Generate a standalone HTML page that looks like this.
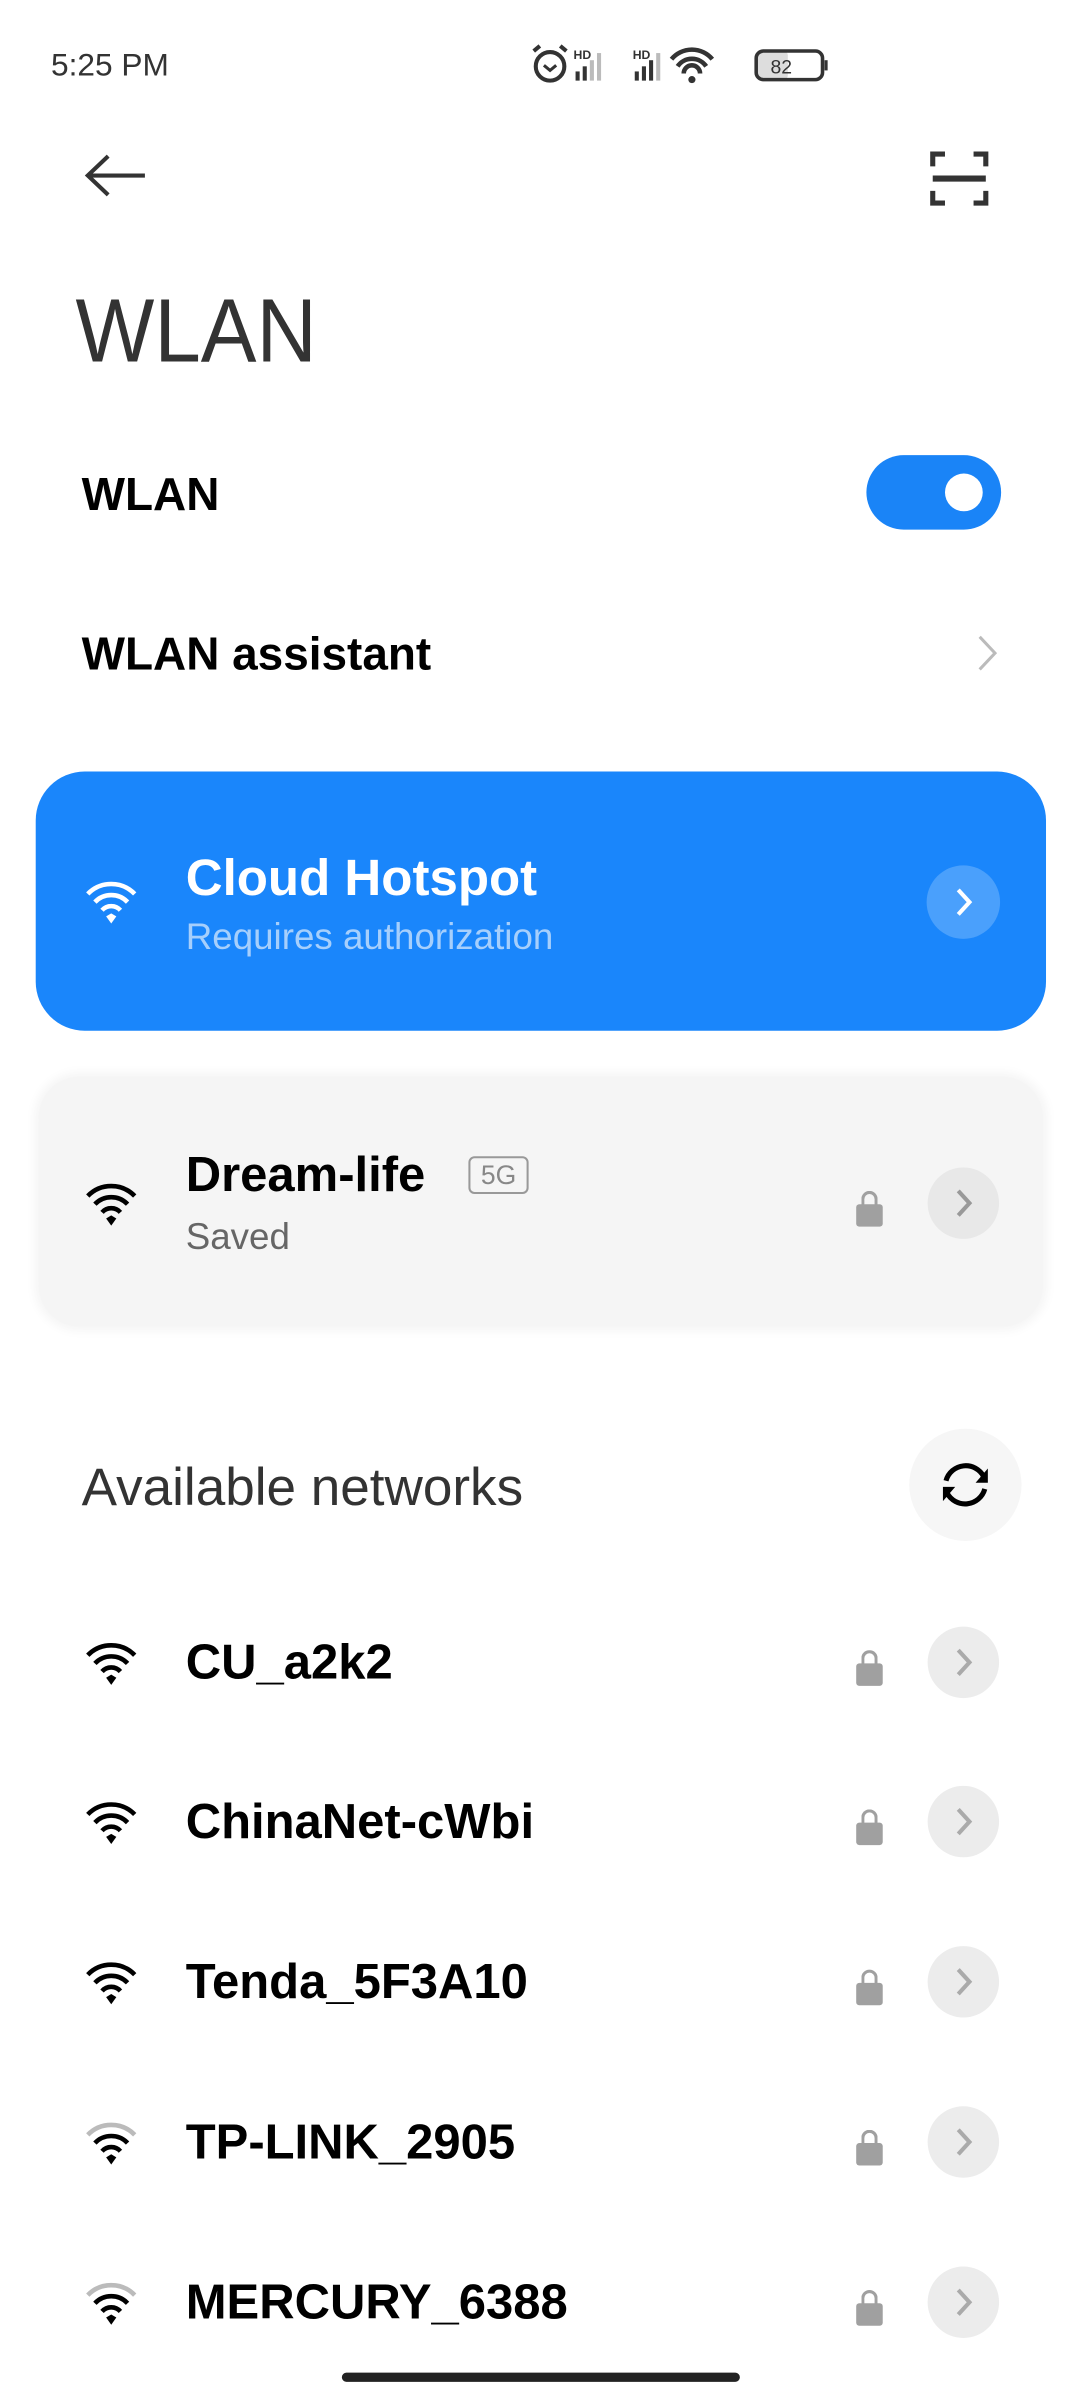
<!DOCTYPE html>
<html style="width:1080px;height:2400px;overflow:hidden"><head><meta charset="utf-8"><style>
*{margin:0;padding:0;box-sizing:border-box}
body{width:1080px;height:2400px;background:#fff;position:relative;overflow:hidden;font-family:"Liberation Sans",sans-serif;color:#000}
#w{position:absolute;left:0;top:0;width:1080px;height:2400px;transform:scale(1.0205);transform-origin:0 0}
.a{position:absolute}
.t{position:absolute;white-space:nowrap;line-height:1}
.chev{position:absolute;width:70px;height:70px;border-radius:50%;background:#ececec}
.lock{position:absolute;width:26px;height:22px;background:#a0a0a0;border-radius:3px}
.lock:before{content:"";position:absolute;left:5px;top:-13px;width:10px;height:14px;border:3px solid #a0a0a0;border-bottom:none;border-radius:9px 9px 0 0}
</style></head><body><div id="w">
<div class="t" style="left:50px;top:48px;font-size:31px;color:#333">5:25 PM</div>
<svg class="a" style="left:515px;top:40px" width="310" height="50" viewBox="0 0 310 50">
 <circle cx="24" cy="25" r="14" fill="none" stroke="#333" stroke-width="4"/>
 <path d="M18 24l6 5 6-5" fill="none" stroke="#333" stroke-width="3"/>
 <path d="M8 10l6-5M40 10l-6-5" stroke="#333" stroke-width="4"/>
 <text x="47" y="18" font-size="12" font-weight="bold" fill="#333" font-family="Liberation Sans">HD</text>
 <rect x="49" y="30" width="4" height="9" fill="#333"/><rect x="56" y="25" width="4" height="14" fill="#333"/><rect x="63" y="19" width="4" height="20" fill="#bbb"/><rect x="70" y="12" width="4" height="27" fill="#bbb"/>
 <text x="105" y="18" font-size="12" font-weight="bold" fill="#333" font-family="Liberation Sans">HD</text>
 <rect x="107" y="30" width="4" height="9" fill="#333"/><rect x="114" y="25" width="4" height="14" fill="#333"/><rect x="121" y="19" width="4" height="20" fill="#333"/><rect x="128" y="12" width="4" height="27" fill="#bbb"/>
 <path d="M143 18a26 26 0 0 1 40 0M149 25a17 17 0 0 1 28 0M155 32a8 8 0 0 1 16 0" fill="none" stroke="#333" stroke-width="4.5"/>
 <circle cx="163" cy="38" r="3.5" fill="#333"/>
 <rect x="227" y="10" width="30" height="28" rx="4" fill="#ddd"/>
 <rect x="226" y="10" width="65" height="28" rx="7" fill="none" stroke="#333" stroke-width="3.5"/>
 <rect x="293" y="19" width="3" height="10" fill="#333"/>
 <text x="240" y="32" font-size="19" fill="#333" font-family="Liberation Sans">82</text>
</svg>
<svg class="a" style="left:82px;top:150px" width="62" height="44"><path d="M4 22H60M24 3L4 22l20 19" fill="none" stroke="#333" stroke-width="4"/></svg>
<svg class="a" style="left:910px;top:145px" width="60" height="60"><path d="M4 18V6h12M56 18V6H44M4 42v12h12M56 42v12H44" fill="none" stroke="#333" stroke-width="5"/><path d="M4 30h52" stroke="#333" stroke-width="6"/></svg>
<div class="t" style="left:74px;top:280px;font-size:88px;font-weight:300;color:#333;transform:scaleX(0.93);transform-origin:left">WLAN</div>
<div class="t" style="left:80px;top:462px;font-size:45px;font-weight:bold">WLAN</div>
<div class="a" style="left:849px;top:446px;width:132px;height:73px;border-radius:37px;background:#1a84f7"></div>
<div class="a" style="left:926px;top:464px;width:37px;height:37px;border-radius:50%;background:#fff"></div>
<div class="t" style="left:80px;top:618px;font-size:45px;font-weight:bold">WLAN assistant</div>
<svg class="a" style="left:956px;top:620px" width="24" height="40"><path d="M4 4l15 16L4 36" fill="none" stroke="#bbb" stroke-width="3"/></svg>

<div class="a" style="left:35px;top:756px;width:990px;height:254px;border-radius:48px;background:#1a86fb"></div>
<svg class="a" style="left:82px;top:860px" width="54" height="46" viewBox="0 0 54 46"><path d="M4 16a32 32 0 0 1 46 0M11 24a22 22 0 0 1 32 0M18 32a12 12 0 0 1 18 0" fill="none" stroke="#fff" stroke-width="4.5"/><path d="M22 38l5-3 5 3-5 7z" fill="#fff"/></svg>
<div class="t" style="left:182px;top:835px;font-size:50px;font-weight:bold;color:#fff">Cloud Hotspot</div>
<div class="t" style="left:182px;top:900px;font-size:36px;color:#a6cffc">Requires authorization</div>
<div class="a" style="left:908px;top:848px;width:72px;height:72px;border-radius:50%;background:#4aa0fc"></div>
<svg class="a" style="left:935px;top:868px" width="20" height="32"><path d="M4 4l11 12L4 28" fill="none" stroke="#fff" stroke-width="4"/></svg>

<div class="a" style="left:38px;top:1055px;width:984px;height:245px;border-radius:40px;background:#f5f5f5;box-shadow:0 0 10px 4px #f5f5f5"></div>
<svg class="a" style="left:82px;top:1156px" width="54" height="46" viewBox="0 0 54 46"><path d="M4 16a32 32 0 0 1 46 0M11 24a22 22 0 0 1 32 0M18 32a12 12 0 0 1 18 0" fill="none" stroke="#000" stroke-width="4.5"/><path d="M22 38l5-3 5 3-5 7z" fill="#000"/></svg>
<div class="t" style="left:182px;top:1128px;font-size:48px;font-weight:bold">Dream-life</div>
<div class="a" style="left:459px;top:1133px;width:59px;height:37px;border:2.5px solid #999;border-radius:6px;font-size:26px;color:#888;line-height:32px;text-align:center">5G</div>
<div class="t" style="left:182px;top:1194px;font-size:36px;color:#666">Saved</div>
<div class="lock" style="left:839px;top:1180px"></div>
<div class="chev" style="left:909px;top:1144px;background:#e8e8e8"></div>
<svg class="a" style="left:935px;top:1163px" width="20" height="32"><path d="M4 4l11 12L4 28" fill="none" stroke="#999" stroke-width="4"/></svg>

<div class="t" style="left:80px;top:1432px;font-size:52px;color:#333">Available networks</div>
<div class="a" style="left:891px;top:1400px;width:110px;height:110px;border-radius:50%;background:#f6f6f6"></div>
<svg class="a" style="left:916px;top:1425px" width="60" height="60" viewBox="0 0 60 60"><path d="M48 22A20 20 0 0 0 11 26M12 38a20 20 0 0 0 37-4" fill="none" stroke="#000" stroke-width="5"/><path d="M52 14v14H40z" fill="#000"/><path d="M8 46V32h12z" fill="#000"/></svg>

<svg class="a" style="left:82px;top:1606px" width="54" height="46" viewBox="0 0 54 46"><path d="M4 16a32 32 0 0 1 46 0M11 24a22 22 0 0 1 32 0M18 32a12 12 0 0 1 18 0" fill="none" stroke="#000" stroke-width="4.5"/><path d="M22 38l5-3 5 3-5 7z" fill="#000"/></svg>
<div class="t" style="left:182px;top:1606px;font-size:48px;font-weight:bold">CU_a2k2</div>
<div class="lock" style="left:839px;top:1630px"></div><div class="chev" style="left:909px;top:1594px"></div>
<svg class="a" style="left:935px;top:1613px" width="20" height="32"><path d="M4 4l11 12L4 28" fill="none" stroke="#aaa" stroke-width="4"/></svg>

<svg class="a" style="left:82px;top:1762px" width="54" height="46" viewBox="0 0 54 46"><path d="M4 16a32 32 0 0 1 46 0M11 24a22 22 0 0 1 32 0M18 32a12 12 0 0 1 18 0" fill="none" stroke="#000" stroke-width="4.5"/><path d="M22 38l5-3 5 3-5 7z" fill="#000"/></svg>
<div class="t" style="left:182px;top:1762px;font-size:48px;font-weight:bold">ChinaNet-cWbi</div>
<div class="lock" style="left:839px;top:1786px"></div><div class="chev" style="left:909px;top:1750px"></div>
<svg class="a" style="left:935px;top:1769px" width="20" height="32"><path d="M4 4l11 12L4 28" fill="none" stroke="#aaa" stroke-width="4"/></svg>

<svg class="a" style="left:82px;top:1919px" width="54" height="46" viewBox="0 0 54 46"><path d="M4 16a32 32 0 0 1 46 0M11 24a22 22 0 0 1 32 0M18 32a12 12 0 0 1 18 0" fill="none" stroke="#000" stroke-width="4.5"/><path d="M22 38l5-3 5 3-5 7z" fill="#000"/></svg>
<div class="t" style="left:182px;top:1919px;font-size:48px;font-weight:bold">Tenda_5F3A10</div>
<div class="lock" style="left:839px;top:1943px"></div><div class="chev" style="left:909px;top:1907px"></div>
<svg class="a" style="left:935px;top:1926px" width="20" height="32"><path d="M4 4l11 12L4 28" fill="none" stroke="#aaa" stroke-width="4"/></svg>

<svg class="a" style="left:82px;top:2076px" width="54" height="46" viewBox="0 0 54 46"><path d="M4 16a32 32 0 0 1 46 0" fill="none" stroke="#bbb" stroke-width="4.5"/><path d="M11 24a22 22 0 0 1 32 0M18 32a12 12 0 0 1 18 0" fill="none" stroke="#000" stroke-width="4.5"/><path d="M22 38l5-3 5 3-5 7z" fill="#000"/></svg>
<div class="t" style="left:182px;top:2076px;font-size:48px;font-weight:bold">TP-LINK_2905</div>
<div class="lock" style="left:839px;top:2100px"></div><div class="chev" style="left:909px;top:2064px"></div>
<svg class="a" style="left:935px;top:2083px" width="20" height="32"><path d="M4 4l11 12L4 28" fill="none" stroke="#aaa" stroke-width="4"/></svg>

<svg class="a" style="left:82px;top:2233px" width="54" height="46" viewBox="0 0 54 46"><path d="M4 16a32 32 0 0 1 46 0" fill="none" stroke="#bbb" stroke-width="4.5"/><path d="M11 24a22 22 0 0 1 32 0M18 32a12 12 0 0 1 18 0" fill="none" stroke="#000" stroke-width="4.5"/><path d="M22 38l5-3 5 3-5 7z" fill="#000"/></svg>
<div class="t" style="left:182px;top:2233px;font-size:48px;font-weight:bold">MERCURY_6388</div>
<div class="lock" style="left:839px;top:2257px"></div><div class="chev" style="left:909px;top:2221px"></div>
<svg class="a" style="left:935px;top:2240px" width="20" height="32"><path d="M4 4l11 12L4 28" fill="none" stroke="#aaa" stroke-width="4"/></svg>

<div class="a" style="left:335px;top:2325px;width:390px;height:9px;border-radius:5px;background:#222"></div>
</div></body></html>
